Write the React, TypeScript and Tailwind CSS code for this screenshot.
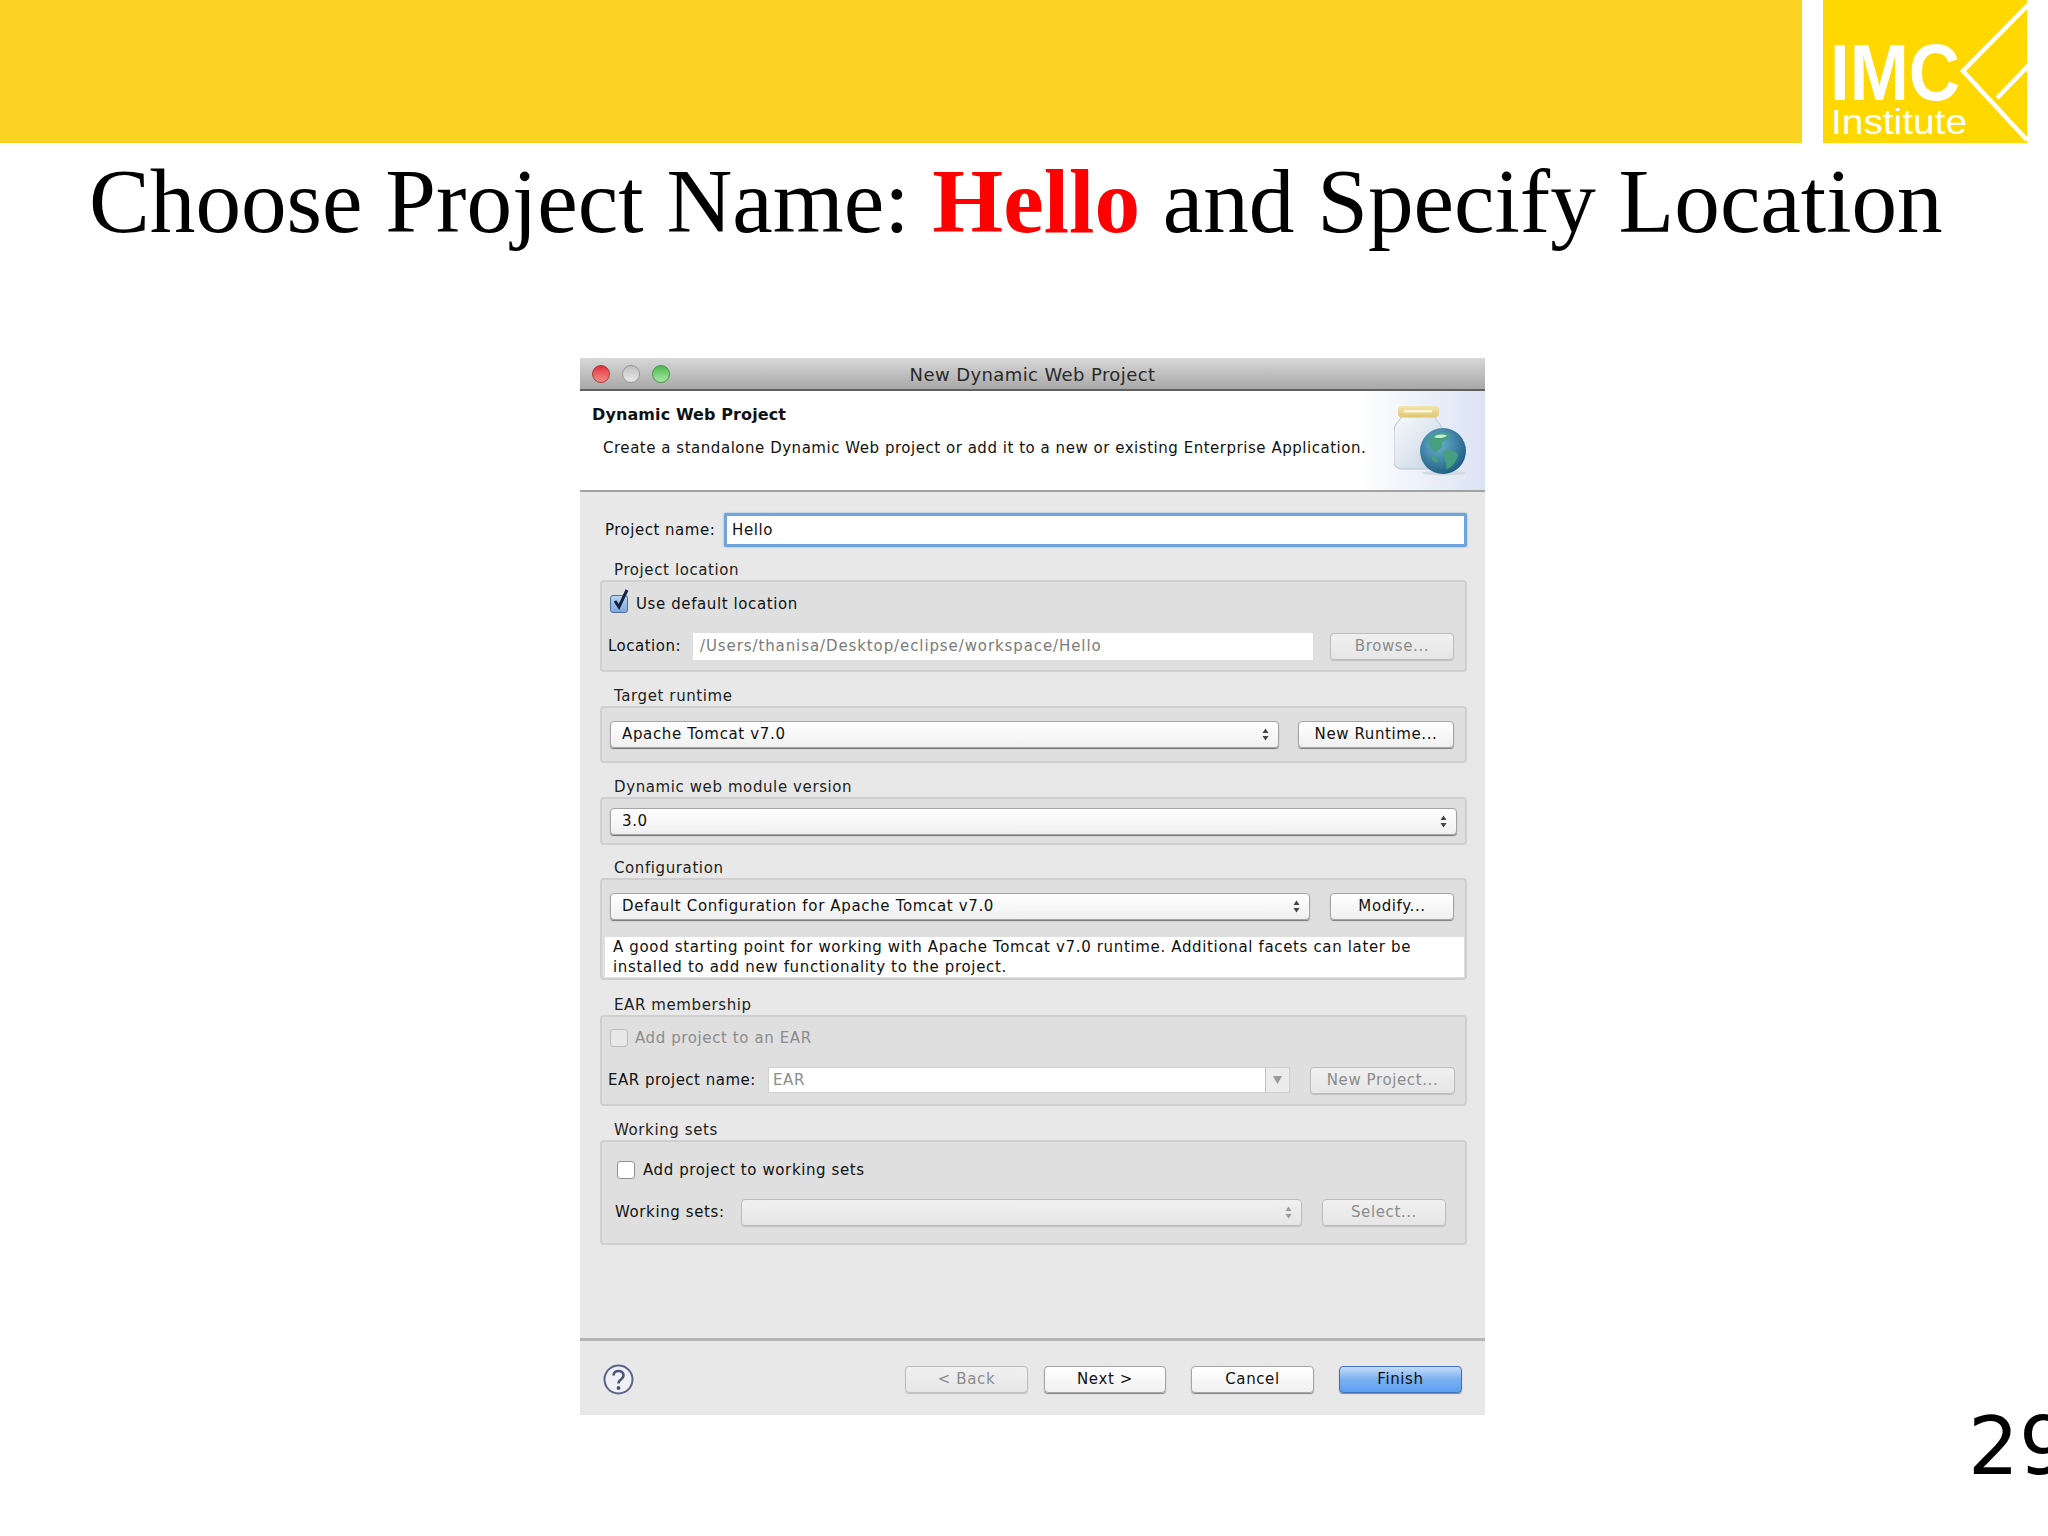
import React from 'react';

const Updown = ({ faded = false }: { faded?: boolean }) => (
  <svg width="7" height="13" viewBox="0 0 7 13" className="shrink-0">
    <path d="M3.5 0.5 L6.5 5 H0.5 Z M3.5 12.5 L0.5 8 H6.5 Z" fill={faded ? '#9a9a9a' : '#444'} />
  </svg>
);

const Button = ({
  label,
  width,
  disabled = false,
  primary = false,
}: {
  label: string;
  width: string;
  disabled?: boolean;
  primary?: boolean;
}) => (
  <div
    className={`${width} h-[27px] shrink-0 flex items-center justify-center rounded-[4px] border text-[15px] leading-none ${
      primary
        ? 'border-[#3f6fb5] bg-gradient-to-b from-[#c4dcf8] via-[#79b0f0] to-[#5f9ff0] text-[#111] shadow-[0_1px_1px_#8a8a8a]'
        : disabled
          ? 'border-[#bdbdbd] bg-gradient-to-b from-[#f0f0f0] to-[#e6e6e6] text-[#8c8c8c] shadow-[0_1px_1px_#c0c0c0]'
          : 'border-[#a5a5a5] bg-gradient-to-b from-white to-[#f0f0f0] text-[#111] shadow-[0_1px_1px_#808080]'
    }`}
  >
    {label}
  </div>
);

const Select = ({ value, className }: { value: string; className: string }) => (
  <div
    className={`${className} h-[27px] flex items-center justify-between pl-[11px] pr-[9px] rounded-[4px] border border-[#a5a5a5] bg-gradient-to-b from-white to-[#f0f0f0] shadow-[0_1px_1px_#707070] text-[15px] tracking-[0.65px] text-[#111]`}
  >
    <span>{value}</span>
    <Updown />
  </div>
);

const Checkbox = ({ checked = false, faded = false }: { checked?: boolean; faded?: boolean }) => (
  <div
    className={`relative w-[18px] h-[18px] shrink-0 rounded-[3px] border ${
      checked
        ? 'border-[#4d6d9c] bg-gradient-to-b from-[#b9d3f0] to-[#7fa9da]'
        : faded
          ? 'border-[#bcbcbc] bg-[#e8e8e8]'
          : 'border-[#8f8f8f] bg-white'
    }`}
  >
    {checked && (
      <svg width="20" height="24" viewBox="0 0 20 24" className="absolute left-[0px] top-[-8px]">
        <path d="M4 13 L8 19 L16 2" fill="none" stroke="#10233f" strokeWidth="3" />
      </svg>
    )}
  </div>
);

const Group = ({
  title,
  className,
  children,
}: {
  title: string;
  className: string;
  children: React.ReactNode;
}) => (
  <div>
    <div className="ml-[14px] h-[24px] -mb-[2px] flex items-center text-[15px] text-[#222]">{title}</div>
    <div
      className={`${className} rounded-[4px] border-2 border-[#cfcfcf] bg-[#dfdfe0] flex flex-col`}
    >
      {children}
    </div>
  </div>
);

const JarIcon = () => (
  <svg width="74" height="70" viewBox="0 0 74 70">
    <defs>
      <linearGradient id="jar" x1="0" y1="0" x2="1" y2="1">
        <stop offset="0" stopColor="#f7fafc" />
        <stop offset="1" stopColor="#c6d3e2" />
      </linearGradient>
      <linearGradient id="lid" x1="0" y1="0" x2="0" y2="1">
        <stop offset="0" stopColor="#f4e6ae" />
        <stop offset="1" stopColor="#e0c777" />
      </linearGradient>
      <radialGradient id="globe" cx="0.4" cy="0.35" r="0.75">
        <stop offset="0" stopColor="#6cb2d2" />
        <stop offset="1" stopColor="#16557a" />
      </radialGradient>
    </defs>
    <ellipse cx="50" cy="67" rx="22" ry="2.5" fill="#d4dae2" />
    <path
      d="M7 11 C6 15 0 17 0 26 V56 C0 61 4 63 9 63 H38 C44 63 48 60 48 56 V26 C48 17 42 15 41 11 Z"
      fill="url(#jar)"
      stroke="#b4c2d2"
    />
    <rect x="4" y="0" width="41" height="11" rx="3.5" fill="url(#lid)" />
    <rect x="10" y="4" width="28" height="2.5" fill="#fdf6d8" />
    <circle cx="49" cy="45" r="23" fill="url(#globe)" />
    <path
      d="M35 32 C41 26 51 25 57 29 C54 35 50 33 48 37 C50 43 44 43 42 47 C38 45 33 39 35 32 Z M50 45 C56 43 62 45 64 49 C62 57 56 63 52 63 C54 57 48 51 50 45 Z M38 49 C43 49 45 53 43 57 C39 55 37 53 38 49 Z"
      fill="#46a080"
    />
    <path d="M40 31 C44 28 50 28 53 30 C49 32 44 33 40 31 Z" fill="#d4ead8" />
  </svg>
);

const Logo = () => (
  <svg width="204" height="143" viewBox="0 0 204 143" className="shrink-0 ml-[21px] bg-[#ffd800]">
    <path
      d="M206 4 L140 71 L204 140 M174 98 L206 65"
      fill="none"
      stroke="#ffffff"
      strokeWidth="4.5"
    />
    <text
      x="7"
      y="100"
      fill="#ffffff"
      fontFamily="'Liberation Sans', Arial, sans-serif"
      fontWeight="700"
      fontSize="80"
      textLength="130"
      lengthAdjust="spacingAndGlyphs"
    >
      IMC
    </text>
    <text
      x="8"
      y="134"
      fill="#ffffff"
      fontFamily="'Liberation Sans', Arial, sans-serif"
      fontSize="35"
      textLength="136"
      lengthAdjust="spacingAndGlyphs"
    >
      Institute
    </text>
  </svg>
);

export default function App() {
  return (
    <div className="w-[2048px] h-[1536px] overflow-hidden bg-white flex flex-col">
      <div className="flex h-[143px] shrink-0">
        <div className="w-[1802px] bg-[#fdd323]" />
        <Logo />
      </div>

      <h1 className="mt-[16px] ml-[89px] h-[85px] leading-[85px] whitespace-nowrap font-['Liberation_Serif',serif] text-[91.2px] text-black">
        Choose Project Name: <span className="font-bold text-[#ff0000]">Hello</span> and Specify
        Location
      </h1>

      {/* dialog */}
      <div className="mt-[114px] ml-[580px] w-[905px] h-[1057px] shrink-0 flex flex-col bg-[#e8e8e9] font-['DejaVu_Sans',sans-serif] text-[15px] tracking-[0.6px] text-[#111]">
        <div className="relative h-[33px] shrink-0 flex items-center justify-center pt-[2px] border-b-2 border-[#606060] bg-gradient-to-b from-[#d8d8d8] to-[#a8a8a8] text-[#2a2a2a] text-[18px] tracking-[0.4px]">
          <div className="absolute left-[12px] top-[7px] flex gap-[12px]">
            <div className="w-[18px] h-[18px] rounded-full border border-[#a83a3a] bg-gradient-to-b from-[#e02a3a] to-[#f58a8a]" />
            <div className="w-[18px] h-[18px] rounded-full border border-[#999] bg-gradient-to-b from-[#c0c0c0] to-[#e8e8e8]" />
            <div className="w-[18px] h-[18px] rounded-full border border-[#4a9a4a] bg-gradient-to-b from-[#48b848] to-[#a8e8a8]" />
          </div>
          New Dynamic Web Project
        </div>

        <div className="relative h-[101px] shrink-0 border-b-2 border-[#a2a2a2] bg-gradient-to-r from-white from-[86%] to-[#dbe3f4] pl-[12px] pt-[12px]">
          <div className="h-[24px] flex items-center font-bold text-[16px] tracking-[0.1px] text-[#111]">
            Dynamic Web Project
          </div>
          <div className="ml-[11px] mt-[9px] h-[24px] flex items-center text-[15px] tracking-[0.53px]">
            Create a standalone Dynamic Web project or add it to a new or existing Enterprise Application.
          </div>
          <div className="absolute right-[17px] top-[15px]">
            <JarIcon />
          </div>
        </div>

        <div className="pl-[20px] pr-[18px] pt-[21px] flex flex-col">
          <div className="flex items-center h-[34px]">
            <div className="ml-[5px] w-[119px] text-[15px] whitespace-nowrap tracking-[0.5px]">Project name:</div>
            <div className="flex-1 h-[34px] flex items-center pl-[5px] bg-white border-[3px] border-[#6fa5dc] rounded-[2px] shadow-[0_0_2px_#6fa5dc] text-[15px]">
              Hello
            </div>
          </div>

          <div className="mt-[11px]">
            <Group title="Project location" className="h-[92px]">
              <div className="flex items-center h-[24px] mt-[10px] ml-[8px] gap-[8px]">
                <Checkbox checked />
                Use default location
              </div>
              <div className="flex items-center mt-[16px] h-[28px] ml-[6px]">
                <div className="w-[85px] tracking-[0.5px]">Location:</div>
                <div className="w-[620px] h-[27px] flex items-center pl-[7px] bg-white text-[#7a7a7a] tracking-[0.9px]">
                  /Users/thanisa/Desktop/eclipse/workspace/Hello
                </div>
                <div className="ml-[17px]">
                  <Button label="Browse..." width="w-[124px]" disabled />
                </div>
              </div>
            </Group>
          </div>

          <div className="mt-[12px]">
            <Group title="Target runtime" className="h-[57px] justify-center">
              <div className="flex items-center ml-[8px] gap-[19px]">
                <Select value="Apache Tomcat v7.0" className="w-[669px]" />
                <Button label="New Runtime..." width="w-[156px]" />
              </div>
            </Group>
          </div>

          <div className="mt-[12px]">
            <Group title="Dynamic web module version" className="h-[48px] justify-center">
              <Select value="3.0" className="ml-[8px] w-[847px]" />
            </Group>
          </div>

          <div className="mt-[11px]">
            <Group title="Configuration" className="h-[102px]">
              <div className="flex items-center mt-[13px] ml-[8px] gap-[20px]">
                <Select value="Default Configuration for Apache Tomcat v7.0" className="w-[700px]" />
                <Button label="Modify..." width="w-[124px]" />
              </div>
              <div className="mt-[17px] ml-[3px] w-[859px] h-[40px] bg-white pl-[8px] text-[15px] leading-[20px] tracking-[0.65px]">
                A good starting point for working with Apache Tomcat v7.0 runtime. Additional facets can later be
                <br />
                installed to add new functionality to the project.
              </div>
            </Group>
          </div>

          <div className="mt-[13px]">
            <Group title="EAR membership" className="h-[91px]">
              <div className="flex items-center h-[24px] mt-[9px] ml-[8px] gap-[7px] text-[#8c8c8c]">
                <Checkbox faded />
                Add project to an EAR
              </div>
              <div className="flex items-center mt-[16px] h-[28px] ml-[6px]">
                <div className="w-[160px] whitespace-nowrap tracking-[0.5px]">EAR project name:</div>
                <div className="w-[522px] h-[26px] flex items-center bg-white border border-[#d0d0d0] text-[#8c8c8c]">
                  <div className="flex-1 pl-[4px]">EAR</div>
                  <div className="w-[24px] h-full flex items-center justify-center border-l border-[#c0c0c0] bg-[#ececec]">
                    <svg width="9" height="8" viewBox="0 0 9 8">
                      <path d="M0 0 H9 L4.5 8 Z" fill="#9a9a9a" />
                    </svg>
                  </div>
                </div>
                <div className="ml-[20px]">
                  <Button label="New Project..." width="w-[145px]" disabled />
                </div>
              </div>
            </Group>
          </div>

          <div className="mt-[12px]">
            <Group title="Working sets" className="h-[105px]">
              <div className="flex items-center h-[24px] mt-[16px] ml-[15px] gap-[8px]">
                <Checkbox />
                Add project to working sets
              </div>
              <div className="flex items-center mt-[16px] h-[28px] ml-[13px]">
                <div className="w-[126px] whitespace-nowrap">Working sets:</div>
                <div className="w-[561px] h-[27px] flex items-center justify-end pr-[9px] rounded-[4px] border border-[#bdbdbd] bg-gradient-to-b from-[#f0f0f0] to-[#e6e6e6] shadow-[0_1px_1px_#c0c0c0]">
                  <Updown faded />
                </div>
                <div className="ml-[20px]">
                  <Button label="Select..." width="w-[124px]" disabled />
                </div>
              </div>
            </Group>
          </div>
        </div>

        <div className="mt-[93px] h-[3px] shrink-0 bg-[#b4b4b4]" />

        <div className="flex items-center mt-[23px] pl-[23px]">
          <svg width="31" height="31" viewBox="0 0 31 31" className="shrink-0">
            <circle cx="15.5" cy="15.5" r="14" fill="#f0f0f4" stroke="#5a6488" strokeWidth="2" />
            <path
              d="M10.5 11.5 C10.5 5.5 20.5 5.5 20.5 11.5 C20.5 15.5 15.5 15 15.5 19.5"
              fill="none"
              stroke="#4a5478"
              strokeWidth="2.6"
            />
            <circle cx="15.5" cy="24" r="1.9" fill="#4a5478" />
          </svg>
          <div className="ml-[271px] flex">
            <Button label="< Back" width="w-[123px]" disabled />
            <div className="ml-[16px]">
              <Button label="Next >" width="w-[122px]" />
            </div>
            <div className="ml-[25px]">
              <Button label="Cancel" width="w-[123px]" />
            </div>
            <div className="ml-[25px]">
              <Button label="Finish" width="w-[123px]" primary />
            </div>
          </div>
        </div>
      </div>

      <div className="ml-[1968px] h-[64px] leading-[64px] whitespace-nowrap font-['DejaVu_Sans',sans-serif] text-[80px] text-black">
        29
      </div>
    </div>
  );
}
